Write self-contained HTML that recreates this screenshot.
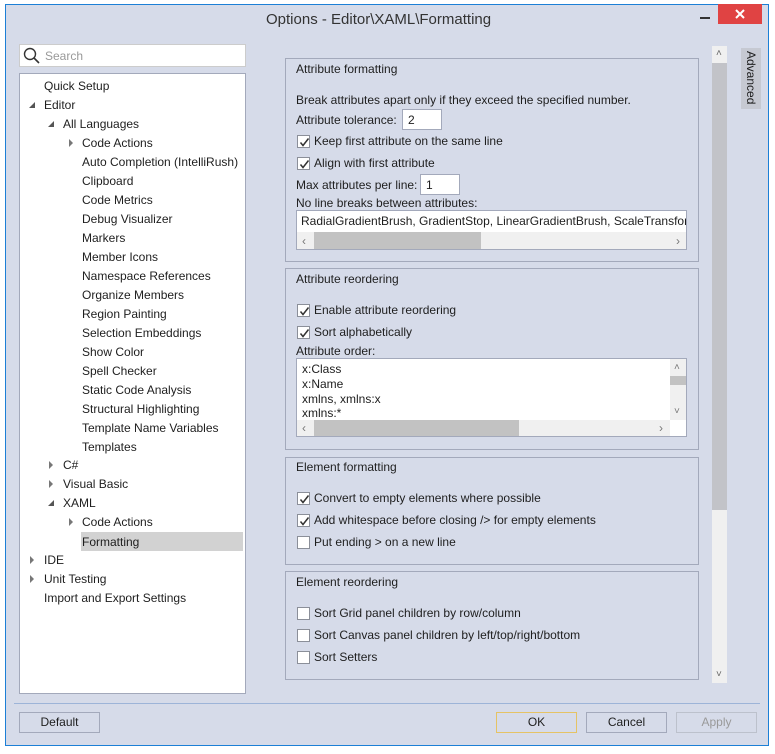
<!DOCTYPE html>
<html><head><meta charset="utf-8"><style>
*{margin:0;padding:0;box-sizing:border-box}
body{width:775px;height:754px;background:#fff;position:relative;overflow:hidden;font-family:"Liberation Sans",sans-serif;font-size:12px;color:#1e1e1e}
.a{position:absolute;white-space:nowrap;line-height:14px}
.win{position:absolute;left:5px;top:4px;width:764px;height:742px;background:#d6dbe9;border:1px solid #1c7fd6}
.grp{position:absolute;left:285px;width:414px;border:1px solid #a3a9bb}
.cb{position:absolute;width:13px;height:13px;background:#fff;border:1px solid #8b8f99}
.cb svg{position:absolute;left:1px;top:1px}
.in{position:absolute;background:#fff;border:1px solid #a3a9bb}
.tri{position:absolute;width:0;height:0}
.tr{border-top:4px solid transparent;border-bottom:4px solid transparent;border-left:4px solid #777}
.td{border-left:6px solid transparent;border-bottom:6px solid #555}
.btn{position:absolute;top:712px;height:21px;border:1px solid #a3a9bb;background:#d6dbe9;text-align:center;line-height:19px}
</style></head><body>
<div class="win"></div>
<div class="a" style="left:266px;top:11px;font-size:15px;line-height:18px;color:#333">Options - Editor\XAML\Formatting</div>
<div style="position:absolute;left:700px;top:17px;width:10px;height:2px;background:#333"></div>
<div style="position:absolute;left:718px;top:4px;width:44px;height:20px;background:#e04343"></div>
<svg style="position:absolute;left:734px;top:8px" width="12" height="12"><path d="M2 2L10 10M10 2L2 10" stroke="#fff" stroke-width="2"/></svg>

<div class="in" style="left:19px;top:44px;width:227px;height:23px;border-color:#ccc"></div>
<svg style="position:absolute;left:23px;top:47px" width="17" height="17"><circle cx="7" cy="7" r="5.5" fill="none" stroke="#333" stroke-width="1.4"/><path d="M11 11L16 16" stroke="#333" stroke-width="1.6"/></svg>
<div class="a" style="left:45px;top:49px;color:#999">Search</div>

<div class="in" style="left:19px;top:73px;width:227px;height:621px"></div>
<div style="position:absolute;left:81px;top:532px;width:162px;height:19px;background:#d2d2d2"></div>
<div class="a" style="left:44px;top:79px">Quick Setup</div>
<div class="tri td" style="left:29px;top:102px"></div><div class="a" style="left:44px;top:98px">Editor</div>
<div class="tri td" style="left:48px;top:121px"></div><div class="a" style="left:63px;top:117px">All Languages</div>
<div class="tri tr" style="left:69px;top:139px"></div><div class="a" style="left:82px;top:136px">Code Actions</div>
<div class="a" style="left:82px;top:155px">Auto Completion (IntelliRush)</div>
<div class="a" style="left:82px;top:174px">Clipboard</div>
<div class="a" style="left:82px;top:193px">Code Metrics</div>
<div class="a" style="left:82px;top:212px">Debug Visualizer</div>
<div class="a" style="left:82px;top:231px">Markers</div>
<div class="a" style="left:82px;top:250px">Member Icons</div>
<div class="a" style="left:82px;top:269px">Namespace References</div>
<div class="a" style="left:82px;top:288px">Organize Members</div>
<div class="a" style="left:82px;top:307px">Region Painting</div>
<div class="a" style="left:82px;top:326px">Selection Embeddings</div>
<div class="a" style="left:82px;top:345px">Show Color</div>
<div class="a" style="left:82px;top:364px">Spell Checker</div>
<div class="a" style="left:82px;top:383px">Static Code Analysis</div>
<div class="a" style="left:82px;top:402px">Structural Highlighting</div>
<div class="a" style="left:82px;top:421px">Template Name Variables</div>
<div class="a" style="left:82px;top:440px">Templates</div>
<div class="tri tr" style="left:49px;top:461px"></div><div class="a" style="left:63px;top:458px">C#</div>
<div class="tri tr" style="left:49px;top:480px"></div><div class="a" style="left:63px;top:477px">Visual Basic</div>
<div class="tri td" style="left:48px;top:500px"></div><div class="a" style="left:63px;top:496px">XAML</div>
<div class="tri tr" style="left:69px;top:518px"></div><div class="a" style="left:82px;top:515px">Code Actions</div>
<div class="a" style="left:82px;top:535px">Formatting</div>
<div class="tri tr" style="left:30px;top:556px"></div><div class="a" style="left:44px;top:553px">IDE</div>
<div class="tri tr" style="left:30px;top:575px"></div><div class="a" style="left:44px;top:572px">Unit Testing</div>
<div class="a" style="left:44px;top:591px">Import and Export Settings</div>

<div class="grp" style="top:58px;height:204px"></div>
<div class="a" style="left:296px;top:62px">Attribute formatting</div>
<div class="a" style="left:296px;top:93px">Break attributes apart only if they exceed the specified number.</div>
<div class="a" style="left:296px;top:113px">Attribute tolerance:</div>
<div class="in" style="left:402px;top:109px;width:40px;height:21px"></div>
<div class="a" style="left:408px;top:113px">2</div>
<div class="cb" style="left:297px;top:135px"><svg width="11" height="11"><path d="M1.5 5.5L4 8.5L9.5 1.5" fill="none" stroke="#333" stroke-width="1.5"/></svg></div>
<div class="a" style="left:314px;top:134px">Keep first attribute on the same line</div>
<div class="cb" style="left:297px;top:157px"><svg width="11" height="11"><path d="M1.5 5.5L4 8.5L9.5 1.5" fill="none" stroke="#333" stroke-width="1.5"/></svg></div>
<div class="a" style="left:314px;top:156px">Align with first attribute</div>
<div class="a" style="left:296px;top:178px">Max attributes per line:</div>
<div class="in" style="left:420px;top:174px;width:40px;height:21px"></div>
<div class="a" style="left:426px;top:178px">1</div>
<div class="a" style="left:296px;top:196px">No line breaks between attributes:</div>
<div class="in" style="left:296px;top:210px;width:391px;height:40px;overflow:hidden"><div class="a" style="left:4px;top:3px">RadialGradientBrush, GradientStop, LinearGradientBrush, ScaleTransfom,</div></div>
<div style="position:absolute;left:297px;top:232px;width:389px;height:17px;background:#f0f0f0"></div>
<div style="position:absolute;left:314px;top:232px;width:167px;height:17px;background:#c2c2c2"></div>
<div class="a" style="left:302px;top:234px;color:#777">‹</div><div class="a" style="left:676px;top:234px;color:#777">›</div>

<div class="grp" style="top:268px;height:182px"></div>
<div class="a" style="left:296px;top:272px">Attribute reordering</div>
<div class="cb" style="left:297px;top:304px"><svg width="11" height="11"><path d="M1.5 5.5L4 8.5L9.5 1.5" fill="none" stroke="#333" stroke-width="1.5"/></svg></div>
<div class="a" style="left:314px;top:303px">Enable attribute reordering</div>
<div class="cb" style="left:297px;top:326px"><svg width="11" height="11"><path d="M1.5 5.5L4 8.5L9.5 1.5" fill="none" stroke="#333" stroke-width="1.5"/></svg></div>
<div class="a" style="left:314px;top:325px">Sort alphabetically</div>
<div class="a" style="left:296px;top:344px">Attribute order:</div>
<div class="in" style="left:296px;top:358px;width:391px;height:79px"></div>
<div class="a" style="left:302px;top:362px">x:Class</div>
<div class="a" style="left:302px;top:377px">x:Name</div>
<div class="a" style="left:302px;top:392px">xmlns, xmlns:x</div>
<div class="a" style="left:302px;top:406px">xmlns:*</div>
<div style="position:absolute;left:670px;top:359px;width:16px;height:61px;background:#f0f0f0"></div>
<div style="position:absolute;left:670px;top:376px;width:16px;height:9px;background:#c2c2c2"></div>
<div class="a" style="left:674px;top:361px;color:#777;font-size:10px">˄</div>
<div class="a" style="left:674px;top:405px;color:#777;font-size:10px">˅</div>
<div style="position:absolute;left:297px;top:420px;width:373px;height:16px;background:#f0f0f0"></div>
<div style="position:absolute;left:314px;top:420px;width:205px;height:16px;background:#c2c2c2"></div>
<div class="a" style="left:302px;top:421px;color:#777">‹</div><div class="a" style="left:659px;top:421px;color:#777">›</div>

<div class="grp" style="top:457px;height:108px"></div>
<div class="a" style="left:296px;top:460px">Element formatting</div>
<div class="cb" style="left:297px;top:492px"><svg width="11" height="11"><path d="M1.5 5.5L4 8.5L9.5 1.5" fill="none" stroke="#333" stroke-width="1.5"/></svg></div>
<div class="a" style="left:314px;top:491px">Convert to empty elements where possible</div>
<div class="cb" style="left:297px;top:514px"><svg width="11" height="11"><path d="M1.5 5.5L4 8.5L9.5 1.5" fill="none" stroke="#333" stroke-width="1.5"/></svg></div>
<div class="a" style="left:314px;top:513px">Add whitespace before closing /&gt; for empty elements</div>
<div class="cb" style="left:297px;top:536px"></div>
<div class="a" style="left:314px;top:535px">Put ending &gt; on a new line</div>

<div class="grp" style="top:571px;height:109px"></div>
<div class="a" style="left:296px;top:575px">Element reordering</div>
<div class="cb" style="left:297px;top:607px"></div>
<div class="a" style="left:314px;top:606px">Sort Grid panel children by row/column</div>
<div class="cb" style="left:297px;top:629px"></div>
<div class="a" style="left:314px;top:628px">Sort Canvas panel children by left/top/right/bottom</div>
<div class="cb" style="left:297px;top:651px"></div>
<div class="a" style="left:314px;top:650px">Sort Setters</div>

<div style="position:absolute;left:712px;top:46px;width:15px;height:637px;background:#f0f0f0"></div>
<div style="position:absolute;left:712px;top:63px;width:15px;height:447px;background:#c2c3c8"></div>
<div class="a" style="left:716px;top:47px;color:#666;font-size:10px">˄</div>
<div class="a" style="left:716px;top:668px;color:#666;font-size:10px">˅</div>

<div style="position:absolute;left:741px;top:48px;width:20px;height:61px;background:#c6c9d2"></div>
<div class="a" style="left:744px;top:51px;writing-mode:vertical-rl;line-height:14px">Advanced</div>

<div style="position:absolute;left:14px;top:703px;width:746px;height:1px;background:#9db4d8"></div>
<div class="btn" style="left:19px;width:81px">Default</div>
<div class="btn" style="left:496px;width:81px;border-color:#e5c365">OK</div>
<div class="btn" style="left:586px;width:81px">Cancel</div>
<div class="btn" style="left:676px;width:81px;color:#999;border-color:#bcc1cc">Apply</div>
</body></html>
